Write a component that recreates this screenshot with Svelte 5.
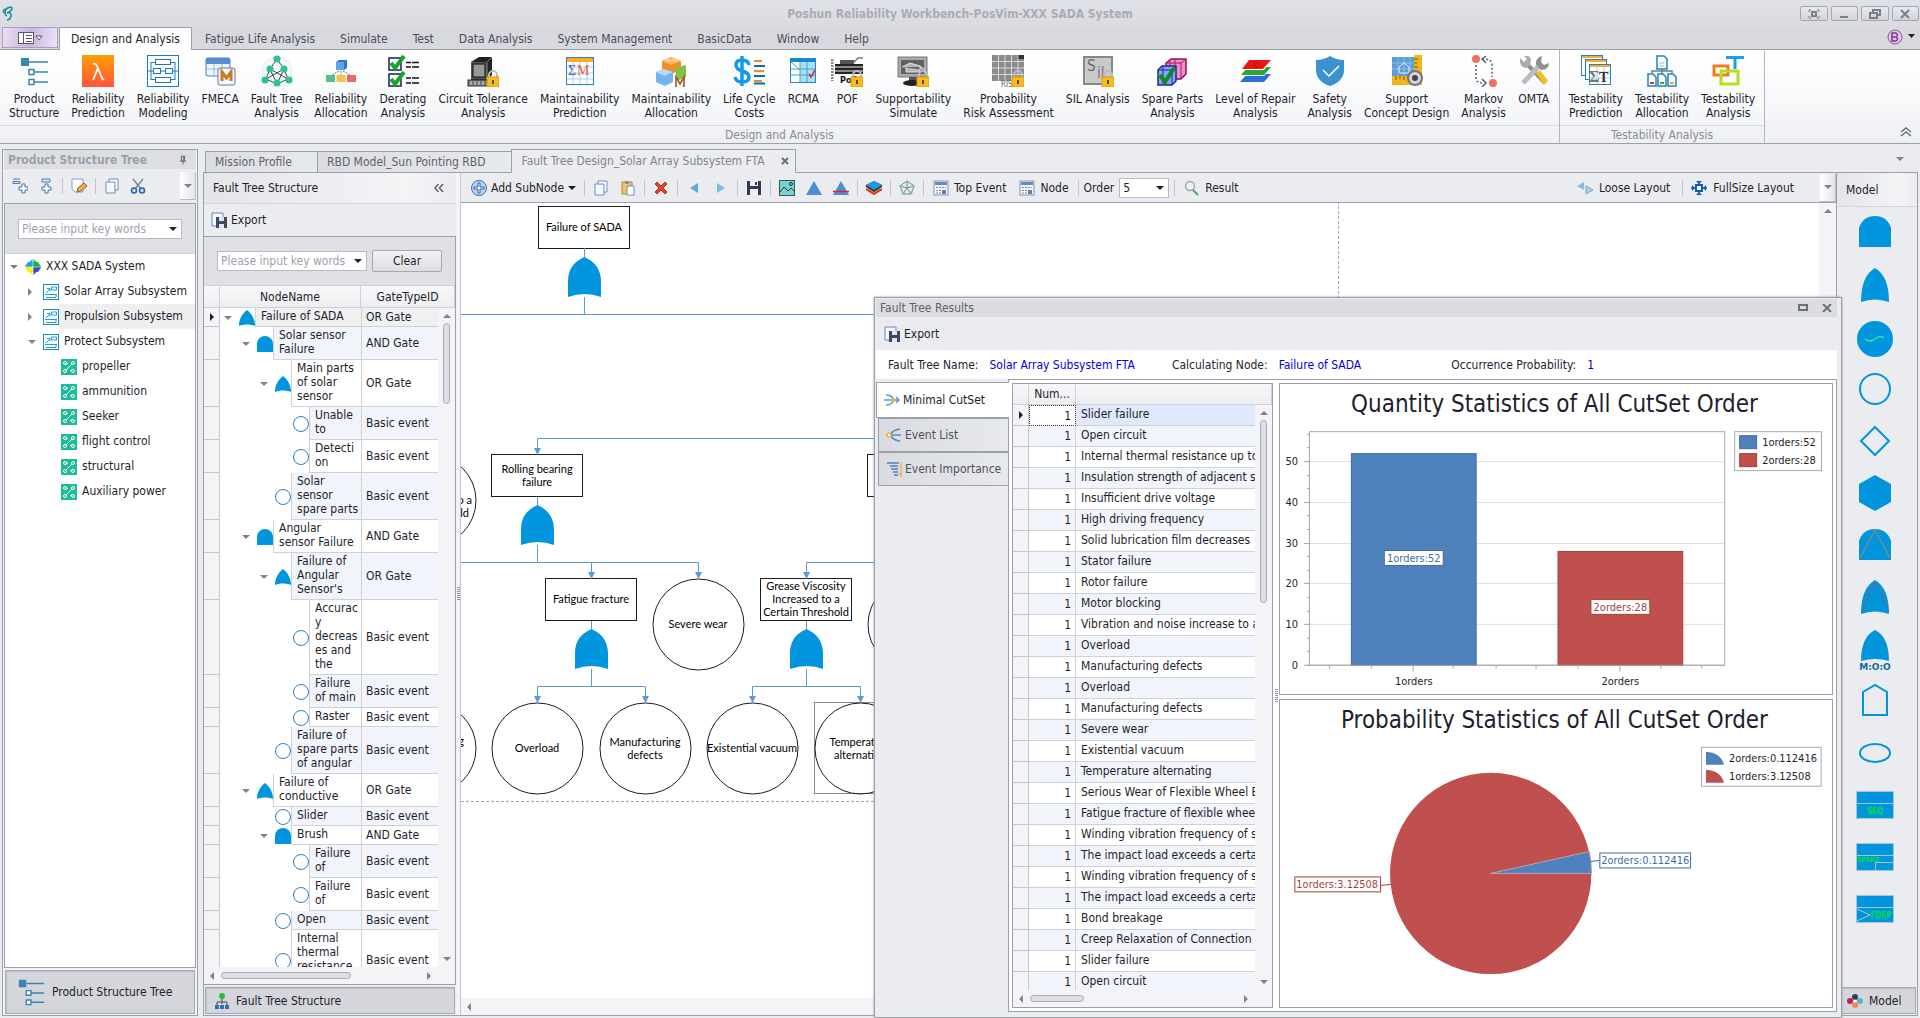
<script lang="ts">
	type FaultNode = { level: number; icon: string; name: string; gate: string; open?: boolean };
	type Shape = { kind: 'box' | 'circle'; x: number; y: number; lines: string[] };

	const lock =
		'<path d="M22 23v-3a4 4 0 0 1 8 0v3" fill="none" stroke="#b9bcc4" stroke-width="2"/><rect x="20" y="22" width="12" height="10" fill="#f8bd1c" stroke="#d79a10"/><rect x="25" y="25" width="2" height="4" fill="#5d4a14"/>';
	const orGate = '<path fill="#0095dc" d="M8 0c5 4 8 9 8 16c-5-2-11-2-16 0c0-7 3-12 8-16z"/>';
	const andGate = '<path fill="#0095dc" d="M0 16V8a8 8 0 0 1 16 0v8z"/>';
	const calendar =
		'<rect x="1" y="1" width="14" height="14" fill="#f3f4f7" stroke="#8b93a8"/><rect x="2" y="2" width="12" height="3" fill="#5c8fca"/><path d="M3 7.5h10M3 10.5h10M3 13h10" stroke="#7f87a0" stroke-dasharray="2 1"/><path d="M9 10h4v4h-4z" fill="#4b86c8"/>';

	const icons: Record<string, string> = {
		structure:
			'<path fill="#3a87ad" d="M3 3h8v8H3z"/><path d="M11 7h19M16 17h14M16 27h14" stroke="#3a87ad" stroke-width="1.5"/><path d="M11 14.5h5v5h-5zM11 24.5h5v5h-5z" fill="#fff" stroke="#3a87ad" stroke-width="1.5"/>',
		lambda:
			'<defs><linearGradient id="lam" x2="0" y2="1"><stop stop-color="#ff9d00"/><stop offset="1" stop-color="#ff5540"/></linearGradient></defs><rect width="32" height="32" fill="url(#lam)"/><path d="M11 9q3-1 4 2l5 12q1 2 2 1M15.500 14L11 25" fill="none" stroke="#fff" stroke-width="1.8"/>',
		blocks:
			'<g fill="#fff" stroke="#1b79c9"><rect x=".5" y=".5" width="31" height="31"/><path d="M4 7v18M28 7v18M0 16h32M4 7.5h24M4 24.5h24" fill="none"/><rect x="8.5" y="4.5" width="15" height="5"/><rect x="6.5" y="13.5" width="7" height="5"/><rect x="18.5" y="13.5" width="7" height="5"/><rect x="8.5" y="22.5" width="15" height="5"/></g>',
		fmeca:
			'<rect x="2" y="3" width="24" height="18" rx="2" fill="#eef4fc" stroke="#4d7cc0"/><path d="M2 3h24v6H2z" fill="#5a8cd0"/><path d="M2 14h24M10 9v12M18 9v12" stroke="#9db7de"/><rect x="14" y="13" width="17" height="17" rx="2" fill="#f4f7fc" stroke="#5a78b0"/><path d="M18 26v-9l4.5 6l4.5-6v9" fill="none" stroke="#d2781c" stroke-width="3"/>',
		fta:
			'<circle cx="16" cy="17" r="15" fill="#f6f8f8" stroke="#e6eaea"/><path d="M16 4L9 14L5 24L16 29L27 24L23 14zM9 14L16 29L23 14M9 14L27 24M23 14L5 24" fill="none" stroke="#3b4a50"/><g fill="#2bc095"><circle cx="16" cy="4" r="3.500"/><circle cx="9" cy="14" r="3.500"/><circle cx="23" cy="14" r="3.500"/><circle cx="4" cy="25" r="3.500"/><circle cx="16" cy="28" r="3.500"/><circle cx="28" cy="25" r="3.500"/></g>',
		alloc:
			'<path d="M11 7l3-2h8v8l-3 2h-8z" fill="#2f77c8"/><path d="M11 7h8v8h-8z" fill="#5ca5e8"/><path d="M14 16l-7 4M16 16v4M18 16l7 4" stroke="#5a7fa8" stroke-dasharray="2 1"/><rect x="1" y="20" width="9" height="7" fill="#5ac08a"/><rect x="11.500" y="20" width="9" height="7" fill="#f7c046"/><rect x="22" y="20" width="9" height="7" fill="#ee6a68"/>',
		derating:
			'<g fill="#fff" stroke="#12204e" stroke-width="1.500"><rect x="2" y="3" width="12" height="12"/><rect x="2" y="19" width="12" height="12"/></g><path d="M4 8l4 5L17 1M4 24l4 5l9-12" fill="none" stroke="#18a32c" stroke-width="4"/><path d="M19 7.500h5m1 0h7M19 12h5m1 0h7M19 23h5m1 0h7M19 28h5m1 0h7" stroke="#111" stroke-width="1.500"/>',
		circuit:
			'<path d="M4 7l8-5h13v18l-5 5H4z" fill="#222"/><path d="M4 7h16v17H4z" fill="#555"/><rect x="6" y="9" width="12" height="13" fill="#999" stroke="#111"/><path d="M20 7l5-5M20 8v16" stroke="#888"/><rect x="1" y="25" width="22" height="6" fill="#777" stroke="#333"/><path d="M4 26v4M8 26v4M12 26v4M16 26v4" stroke="#ddd"/>' + lock,
		maintPred:
			'<rect x="2.500" y="2.500" width="27" height="27" fill="#fff" stroke="#2c80b4"/><path d="M3 3h26v4H3z" fill="#f9ac2e"/><path d="M3 12h26M3 18h26M3 24h26M9 7v22M16 7v22M23 7v22" stroke="#a9cfe8"/><text x="4" y="20" font-size="14" font-family="Liberation Serif" fill="#4b5ec8">Σ</text><text x="13" y="20" font-size="14" font-family="Liberation Serif" fill="#e0653a">M</text>',
		maintAlloc:
			'<path d="M7 6l9-4l10 4v9l-10 4l-9-4z" fill="#f28e28"/><path d="M7 6l9-4l10 4l-10 4z" fill="#fbb867"/><path d="M20 13l11-3v12l-9 4z" fill="#84c045"/><path d="M1 17l8-3l9 3v10l-8 4l-9-4z" fill="#74b4ec"/><path d="M1 17l8-3l9 3l-9 4z" fill="#b6daf8"/><g fill="#ffd08f"><ellipse cx="13" cy="5" rx="3" ry="1.500"/><ellipse cx="20" cy="5" rx="3" ry="1.500"/></g><path d="M21 32V22l4 7l4-7v10" fill="none" stroke="#a4532c" stroke-width="1.600"/>',
		cost:
			'<path d="M16 10q-1-5-7-5q-6 0-6 5q0 4 6 6q7 2 7 6q0 5-7 5q-6 0-7-5M9 1v30" fill="none" stroke="#0f9bea" stroke-width="3.500"/><path d="M21 6h8M21 16h10M21 26h8" stroke="#f08a1d" stroke-width="2"/><path d="M21 11h11M21 21h11M21 28.500h11" stroke="#0f6aa8" stroke-width="2"/>',
		rcma:
			'<rect x="3.500" y="3.500" width="25" height="24" fill="#fff" stroke="#2788c8"/><path d="M4 4h24v3H4z" fill="#1487d2"/><path d="M13 7h15v20H13z" fill="#a5e0f4"/><path d="M4 14h24M4 20h24M13 7v20M20 7v20M4 7l9 8" stroke="#4a9bcf"/><path d="M22 19l2 3l4-7" fill="none" stroke="#e62222" stroke-width="1.500"/>',
		pof:
			'<path d="M1 4v22" stroke="#8a8a8a" stroke-width="3" stroke-dasharray="2 1"/><path d="M4 9h28v10H4z" fill="#222"/><path d="M4 12h28M4 16h28" stroke="#8b8b8b" stroke-width="2"/><path d="M9 5h14v4H9z" fill="#555"/><path d="M22 8l5-5h5" fill="none" stroke="#777" stroke-width="1.500"/><text x="9" y="28" font-size="9" font-weight="bold" font-family="DejaVu Sans Condensed" fill="#111">PoF</text>' + lock,
		support:
			'<rect x="1" y="2" width="29" height="20" fill="#aaa" stroke="#777"/><rect x="4" y="5" width="23" height="14" fill="#5f6163"/><path d="M5 12l8-4l10 3l5 4M9 12v5h14v-5" fill="#b5b8bb" stroke="#dfe0e2"/><path d="M12 22h8v4h-8z" fill="#555"/><ellipse cx="15" cy="28" rx="9" ry="3" fill="#222"/>' + lock,
		risk:
			'<path d="M0 0h32v26H0z" fill="#8a8a8a"/><path d="M0 6.500h32M0 13h32M0 19.500h32M6.500 0v26M13 0v26M19.500 0v26M26 0v26" stroke="#d9d9d9"/><path d="M26.500 0H32v4h-5.500z" fill="#333"/><text x="9" y="32" font-size="8" font-family="DejaVu Sans Condensed" fill="#666">RIS</text>' + lock,
		sil:
			'<rect x="2" y="2" width="28" height="27" fill="#c9c9c9" stroke="#888" stroke-width="2"/><text x="5" y="16" font-size="15" font-family="DejaVu Sans Condensed" fill="#666">S</text><text x="15" y="23" font-size="15" font-family="DejaVu Sans Condensed" fill="#777">il</text>' + lock,
		spare:
			'<path d="M10 8l5-4h15v15l-5 5H10z" fill="#f48cc0" stroke="#8c1560" stroke-width="1.500"/><path d="M10 8h15v16M25 8l5-4M14 4v16M19 4v18" fill="none" stroke="#a01c70"/><path d="M2 15l4-4h14v15l-4 4H2z" fill="#86a4f2" stroke="#1a2a9a" stroke-width="1.500"/><path d="M2 15h14v15M16 15l4-4M7 11v18" fill="none" stroke="#1a2a9a"/><path d="M4 20l5 7l9-14" fill="none" stroke="#0e8a1e" stroke-width="4"/>',
		level:
			'<path d="M8 19h24l-7 8H1z" fill="#2c6fd6"/><path d="M9 12h24l-8 9H2z" fill="#fff"/><path d="M9 12h23l-7 8H2z" fill="#27a836"/><path d="M10 4h23l-8 11H3z" fill="#fff"/><path d="M10 5h22l-8 9H3z" fill="#f01414"/><path d="M16 7h3q3 2 0 5h-4z" fill="none" stroke="#9a2020"/>',
		safety:
			'<path d="M16 1q6 4 14 4v10q0 11-14 16Q2 26 2 15V5q8 0 14-4z" fill="#3a92cf"/><path d="M9 15l6 6l10-10" fill="none" stroke="#fff" stroke-width="1.500"/>',
		concept:
			'<rect x="1" y="2" width="23" height="19" fill="#5a9cd8"/><path d="M1 8h23M1 14h23M7 2v19M13 2v19M19 2v19" stroke="#8dbde6"/><path d="M8 16v-4l5-4l5 4v6H9z" fill="none" stroke="#e4f0fa"/><path d="M23 0h8v30H1v-9h22z" fill="#f3b51e"/><path d="M23 4h4M23 8h3M23 12h4M5 21v4M9 21v3M13 21v4M17 21v3" stroke="#7b5b10"/><circle cx="24" cy="23" r="8" fill="#757575"/><circle cx="24" cy="23" r="6" fill="#d5d5d5"/><circle cx="24" cy="23" r="3" fill="#444"/>',
		markov:
			'<circle cx="8" cy="4" r="4" fill="#f0705f"/><circle cx="25" cy="28" r="4" fill="#f0705f"/><path d="M8 10v14q0 4 8 4M14 4q10 0 10 5v13" fill="none" stroke="#4d6272" stroke-width="1.500" stroke-dasharray="2 2"/><path d="M18 1l-4 3l4 4M14 24l4 4l-4 4" fill="none" stroke="#4d6272" stroke-width="1.500"/>',
		omta:
			'<path d="M27 28L9 9" stroke="#8d8f92" stroke-width="4"/><path d="M2 3l4 4l3-3l-3-3q6-1 7 4l-1 5l-4 3Q1 12 2 3z" fill="#a9abae"/><path d="M5 28L20 12" stroke="#b9bbbe" stroke-width="5"/><path d="M18 10q-1-7 6-9l-1 6l3 3l5-2q0 7-8 7z" fill="#8f9295"/><path d="M18 18l4-3l8 11l-4 4z" fill="#f6bd20"/>',
		testPred:
			'<g fill="#fff" stroke="#2c80b4"><rect x="1.500" y=".5" width="21" height="20"/><rect x="5.500" y="4.500" width="21" height="20"/><rect x="9.500" y="9.500" width="21" height="20"/></g><path d="M2 2h20M6 6h20M10 11h20" stroke="#f9ac2e" stroke-width="2"/><path d="M10 17h20M10 23h20M17 12v17M24 12v17" stroke="#a9cfe8"/><text x="9" y="27" font-size="16" font-weight="bold" font-family="Liberation Serif" fill="#777">Σ</text><text x="19" y="27" font-size="14" font-weight="bold" font-family="Liberation Serif" fill="#333">T</text>',
		testAlloc:
			'<g fill="#fff" stroke="#1d84c0" stroke-width="1.500"><path d="M11 1h7l3 3v10H11zM2 19h5l3 3v9H2zM12 19h5l3 3v9h-8zM22 19h5l3 3v9h-8z"/></g><path d="M16 14v5M6 18v-2h20v2" fill="none" stroke="#777" stroke-width="1.500"/><path d="M13 8h5M13 11h5" stroke="#8dbde6"/><path d="M4 27h4v2H4z" fill="#e03030"/><path d="M14 27h4v2h-4z" fill="#4aa81c"/><path d="M24 27h4v2h-4z" fill="#f3a01e"/>',
		testAnalysis:
			'<path d="M14 2.500h18M23 2v12" stroke="#15a0e8" stroke-width="3" fill="none"/><rect x="2" y="11" width="14" height="9" fill="none" stroke="#f47c20" stroke-width="3"/><rect x="9" y="16" width="17" height="13" fill="none" stroke="#b4e01c" stroke-width="3"/>',
		lower: '<path d="M1 1h7M1 3.500h7v2H1z" fill="#dfe9f6" stroke="#4a7bb8"/><path d="M10 6h3v3h3v3h-3v3h-3v-3H7V9h3z" fill="#fff" stroke="#3d72b4"/>',
		insert: '<path d="M4 1h8v3H4z" fill="#dfe9f6" stroke="#4a7bb8"/><path d="M7 6h3v3h3v3h-3v3H7v-3H4V9h3z" fill="#fff" stroke="#3d72b4"/>',
		edit: '<path d="M1 1h11v13H4l-3-3z" fill="#fff" stroke="#8c9cc4"/><path d="M6 14l1-4l6-5l3 3l-6 5z" fill="#f0b04a" stroke="#8a5f20"/>',
		copy: '<path d="M5 1h9v11H5z" fill="#fff" stroke="#6f8cc4"/><path d="M2 4h9v11H2z" fill="#f4f8ff" stroke="#6f8cc4"/>',
		cut: '<path d="M3 1l8 10M13 1L5 11" stroke="#7b8699" stroke-width="1.5"/><circle cx="4" cy="12.500" r="2.500" fill="#cfe0f8" stroke="#2d62b0" stroke-width="1.500"/><circle cx="12" cy="12.500" r="2.500" fill="#cfe0f8" stroke="#2d62b0" stroke-width="1.500"/>',
		system: '<path d="M7.500 0v7.500H0z" fill="#1aa3e8"/><path d="M8.500 0v7.500H16z" fill="#1eb04c"/><path d="M7.500 16V8.500H0z" fill="#fdf000"/><path d="M8.500 16V8.500H16z" fill="#3b4cc8"/><path d="M3 3h4.500v4.500H0z" fill="#1aa3e8"/><path d="M13 3H8.500v4.500H16z" fill="#1eb04c"/><path d="M3 13h4.500V8.500H0z" fill="#fdf000"/><path d="M13 13H8.500V8.500H16z" fill="#3b4cc8"/>',
		subsystem: '<rect x=".5" y=".5" width="15" height="15" fill="#fff" stroke="#1b8fa6"/><path d="M8.500 3h5v3h-5zM3 9l4-4M4 4.500h3v3M2 10.500h12M3 13.500h10v-3" fill="none" stroke="#1aa0d8"/>',
		part: '<rect width="16" height="16" fill="#1cbd9b"/><path d="M5 11l6-6M4 6l3-2M9 12l3-2" stroke="#fff"/><g fill="none" stroke="#fff"><circle cx="4" cy="4" r="1.500"/><circle cx="4" cy="12" r="1.500"/><circle cx="12" cy="4" r="1.500"/><circle cx="12" cy="12" r="1.500"/></g>',
		or: orGate,
		and: andGate,
		basic: '<circle cx="8" cy="8" r="7.500" fill="#fff" stroke="#2f7ec8"/>',
		export: '<path d="M1 1h11v13H1z" fill="#f4f8ff" stroke="#6f83b8"/><path d="M5 5h11v11H5z" fill="#3c4a63"/><path d="M8 5h5v4H8zM8 12h5v4H8z" fill="#dfe6f0"/>',
		addNode: '<circle cx="8" cy="8" r="7.500" fill="#b8d4ef" stroke="#3d72b4"/><path d="M7 3h2v4h4v2H9v4H7V9H3V7h4z" fill="#fff" stroke="#2d62a8"/>',
		paste: '<path d="M2 2h10v12H2z" fill="#f2c468" stroke="#b5842c"/><path d="M5 1h4v3H5z" fill="#8590a6"/><path d="M7 6h7v9H7z" fill="#fff" stroke="#6f8cc4"/>',
		remove: '<path d="M2 4l2-2l4 4l4-4l2 2l-4 4l4 4l-2 2l-4-4l-4 4l-2-2l4-4z" fill="#e0452e" stroke="#b5301f"/>',
		back: '<path d="M12 3v10L4 8z" fill="#5aa6e0"/>',
		forward: '<path d="M4 3v10l8-5z" fill="#7fbbe8"/>',
		save: '<path d="M1 1h14v14H1z" fill="#2f3b50"/><path d="M4 1h8v5H4zM4 9h8v6H4z" fill="#eef1f6"/><path d="M9 2h2v3H9z" fill="#2f3b50"/>',
		image: '<rect x=".5" y=".5" width="15" height="15" fill="#7fd0d4" stroke="#33575a"/><path d="M1 12l4-5l4 4l3-3l3 3" fill="none" stroke="#1c3a3c"/><circle cx="12" cy="4" r="1.500" fill="none" stroke="#1c3a3c"/>',
		tri: '<path d="M8 1l8 14H0z" fill="#4a8fd6"/>',
		triRed: '<path d="M8 1l8 14H0z" fill="#4a8fd6"/><path d="M0 11.500h16" stroke="#e62222" stroke-width="1.500"/>',
		layers: '<path d="M0 10l8 5l8-5l-8-4z" fill="#f5a21c"/><path d="M0 8l8 5l8-5v2l-8 5l-8-5z" fill="#d3311f"/><path d="M0 5l8-4l8 4v2l-8 5l-8-5z" fill="#333"/><path d="M0 5l8-4l8 4l-8 5z" fill="#1a9be4"/>',
		net: '<path d="M8 1l7 5l-3 8H4L1 6zM8 1v7M15 6L8 8L1 6M12 14L8 8l-4 6" fill="none" stroke="#6b8792"/><g fill="#7fc2a8"><circle cx="8" cy="2" r="1.500"/><circle cx="14" cy="6" r="1.500"/><circle cx="2" cy="6" r="1.500"/><circle cx="12" cy="13" r="1.500"/><circle cx="4" cy="13" r="1.500"/></g>',
		calendar,
		search: '<circle cx="6" cy="6" r="4.500" fill="#eaf4f4" stroke="#9aa6b0" stroke-width="1.500"/><path d="M9 10l5 5" stroke="#4fa86a" stroke-width="2"/>',
		loose: '<path d="M7 2v8L0 6z" fill="#8ab8e0"/><path d="M9 6v8l7-4z" fill="#a7d2ee" stroke="#6fa8d4"/>',
		full: '<path d="M5 5h6v6H5z" fill="#fff" stroke="#1458b8" stroke-width="2"/><path d="M8 1v3M8 12v3M0 8h4M12 8h4" stroke="#1458b8" stroke-width="1.500"/><path d="M5 1h6l-3 3zM5 15h6l-3-3zM1 5v6l3-3zM15 5v6l-3-3z" fill="#1458b8"/>',
		cutset: '<path d="M2 3q6 0 8 5q-2 5-8 5M0 8h15M12 5l3 3l-3 3" fill="none" stroke="#5c9bd6" stroke-width="1.500"/><circle cx="9" cy="8" r="2" fill="#f0b030"/>',
		eventList: '<path d="M14 2Q6 3 5 8q1 5 9 6M5 8h10" fill="none" stroke="#4a90d0" stroke-width="1.500"/><circle cx="3" cy="8" r="2" fill="#fff" stroke="#f0b030" stroke-width="1.500"/>',
		importance: '<path d="M1 2h12M4 5h8M5 8h7M7 11h5M8 14h4" stroke="#4a80c8" stroke-width="1.500"/><path d="M15 1v12M13 12l2 3l1-3" stroke="#f0b848" stroke-width="1.500" fill="none"/>',
		faultTree: '<circle cx="8" cy="3" r="3" fill="#20c030"/><path d="M8 6v5M3 12V9h10v3" fill="none" stroke="#444"/><path d="M1 12h4v4H1zM6 12h4v4H6zM11 12h4v4h-4z" fill="#2b6fc0"/>',
		model: '<circle cx="8" cy="4" r="3" fill="#333f55"/><circle cx="3" cy="8" r="3" fill="#c81c50"/><circle cx="13" cy="8" r="3" fill="#5fb4cc"/><circle cx="8" cy="12" r="3" fill="#f08850"/><circle cx="8" cy="8" r="1.500" fill="#fff"/>',
		pin: '<path d="M5 3h6M6 3v6h3V3M10 3v6M4 9.500h8M8 10v4" fill="none" stroke="#6b6e7c" stroke-width="1.500"/>'
	};

	const menu = ['Design and Analysis', 'Fatigue Life Analysis', 'Simulate', 'Test', 'Data Analysis', 'System Management', 'BasicData', 'Window', 'Help'];

	const ribbon = [
		{
			label: 'Design and Analysis',
			items: [
				['structure', 'Product\nStructure'],
				['lambda', 'Reliability\nPrediction'],
				['blocks', 'Reliability\nModeling'],
				['fmeca', 'FMECA'],
				['fta', 'Fault Tree\nAnalysis'],
				['alloc', 'Reliability\nAllocation'],
				['derating', 'Derating\nAnalysis'],
				['circuit', 'Circuit Tolerance\nAnalysis'],
				['maintPred', 'Maintainability\nPrediction'],
				['maintAlloc', 'Maintainability\nAllocation'],
				['cost', 'Life Cycle\nCosts'],
				['rcma', 'RCMA'],
				['pof', 'POF'],
				['support', 'Supportability\nSimulate'],
				['risk', 'Probability\nRisk Assessment'],
				['sil', 'SIL Analysis'],
				['spare', 'Spare Parts\nAnalysis'],
				['level', 'Level of Repair\nAnalysis'],
				['safety', 'Safety\nAnalysis'],
				['concept', 'Support\nConcept Design'],
				['markov', 'Markov\nAnalysis'],
				['omta', 'OMTA']
			]
		},
		{
			label: 'Testability Analysis',
			items: [
				['testPred', 'Testability\nPrediction'],
				['testAlloc', 'Testability\nAllocation'],
				['testAnalysis', 'Testability\nAnalysis']
			]
		}
	];

	const product = [
		{ level: 0, icon: 'system', name: 'XXX SADA System', arrow: 'down' },
		{ level: 1, icon: 'subsystem', name: 'Solar Array Subsystem', arrow: 'right' },
		{ level: 1, icon: 'subsystem', name: 'Propulsion Subsystem', arrow: 'right', selected: true },
		{ level: 1, icon: 'subsystem', name: 'Protect Subsystem', arrow: 'down' },
		{ level: 2, icon: 'part', name: 'propeller' },
		{ level: 2, icon: 'part', name: 'ammunition' },
		{ level: 2, icon: 'part', name: 'Seeker' },
		{ level: 2, icon: 'part', name: 'flight control' },
		{ level: 2, icon: 'part', name: 'structural' },
		{ level: 2, icon: 'part', name: 'Auxiliary power' }
	];

	const faultNodes: FaultNode[] = [
		{ level: 0, icon: 'or', name: 'Failure of SADA', gate: 'OR Gate', open: true },
		{ level: 1, icon: 'and', name: 'Solar sensor\nFailure', gate: 'AND Gate', open: true },
		{ level: 2, icon: 'or', name: 'Main parts\nof solar\nsensor', gate: 'OR Gate', open: true },
		{ level: 3, icon: 'basic', name: 'Unable\nto', gate: 'Basic event' },
		{ level: 3, icon: 'basic', name: 'Detecti\non', gate: 'Basic event' },
		{ level: 2, icon: 'basic', name: 'Solar\nsensor\nspare parts', gate: 'Basic event' },
		{ level: 1, icon: 'and', name: 'Angular\nsensor Failure', gate: 'AND Gate', open: true },
		{ level: 2, icon: 'or', name: "Failure of\nAngular\nSensor's", gate: 'OR Gate', open: true },
		{ level: 3, icon: 'basic', name: 'Accurac\ny\ndecreas\nes and\nthe', gate: 'Basic event' },
		{ level: 3, icon: 'basic', name: 'Failure\nof main', gate: 'Basic event' },
		{ level: 3, icon: 'basic', name: 'Raster', gate: 'Basic event' },
		{ level: 2, icon: 'basic', name: 'Failure of\nspare parts\nof angular', gate: 'Basic event' },
		{ level: 1, icon: 'or', name: 'Failure of\nconductive', gate: 'OR Gate', open: true },
		{ level: 2, icon: 'basic', name: 'Slider', gate: 'Basic event' },
		{ level: 2, icon: 'and', name: 'Brush', gate: 'AND Gate', open: true },
		{ level: 3, icon: 'basic', name: 'Failure\nof', gate: 'Basic event' },
		{ level: 3, icon: 'basic', name: 'Failure\nof', gate: 'Basic event' },
		{ level: 2, icon: 'basic', name: 'Open', gate: 'Basic event' },
		{ level: 2, icon: 'basic', name: 'Internal\nthermal\nresistance\n ', gate: 'Basic event' }
	];

	const cutSets = [
		'Slider failure',
		'Open circuit',
		'Internal thermal resistance up to',
		'Insulation strength of adjacent s',
		'Insufficient drive voltage',
		'High driving frequency',
		'Solid lubrication film decreases',
		'Stator failure',
		'Rotor failure',
		'Motor blocking',
		'Vibration and noise increase to a',
		'Overload',
		'Manufacturing defects',
		'Overload',
		'Manufacturing defects',
		'Severe wear',
		'Existential vacuum',
		'Temperature alternating',
		'Serious Wear of Flexible Wheel B',
		'Fatigue fracture of flexible wheel',
		'Winding vibration frequency of s',
		'The impact load exceeds a certain',
		'Winding vibration frequency of s',
		'The impact load exceeds a certain',
		'Bond breakage',
		'Creep Relaxation of Connection',
		'Slider failure',
		'Open circuit'
	];

	const shapes: Shape[] = [
		{ kind: 'box', x: 123, y: 24, lines: ['Failure of SADA'] },
		{ kind: 'box', x: 76, y: 272, lines: ['Rolling bearing', 'failure'] },
		{ kind: 'box', x: 452, y: 272, lines: [] },
		{ kind: 'box', x: 130, y: 396, lines: ['Fatigue fracture'] },
		{ kind: 'box', x: 345, y: 396, lines: ['Grease Viscosity', 'Increased to a', 'Certain Threshold'] },
		{ kind: 'circle', x: -31, y: 297, lines: [] },
		{ kind: 'circle', x: 237, y: 421, lines: ['Severe wear'] },
		{ kind: 'circle', x: 452, y: 421, lines: [] },
		{ kind: 'circle', x: -31, y: 545, lines: [] },
		{ kind: 'circle', x: 76, y: 545, lines: ['Overload'] },
		{ kind: 'circle', x: 184, y: 545, lines: ['Manufacturing', 'defects'] },
		{ kind: 'circle', x: 291, y: 545, lines: ['Existential vacuum'] },
		{ kind: 'circle', x: 399, y: 545, lines: ['Temperature', 'alternating'] }
	];
	const gates = [
		[123, 54],
		[76, 302],
		[130, 426],
		[345, 426]
	];
	const links = [
		'M123.5 45v9M123.5 94v17.5M0 111.5h1358',
		'M76.5 252V235.5H460M76.5 294v8M76.5 342v17.5M0 359.5h237.5V376M130.5 359.5V376',
		'M130.5 418v8M130.5 466v17.5M76.5 500v-16.5h108V500',
		'M345.5 376v-16.5H460M345.5 418v8M345.5 466v17.5M291.5 500v-16.5h108V500'
	];
	const arrows = [
		[76, 251],
		[130, 375],
		[237, 375],
		[345, 375],
		[76, 499],
		[184, 499],
		[291, 499],
		[399, 499]
	];

	const palette = [
		{ name: 'AND gate', svg: '<path fill="#0095dc" d="M8 38V19q4-12 16-12t16 12v19z"/>' },
		{ name: 'OR gate', svg: '<path fill="#0095dc" d="M24 7q14 8 14 34q-14-5-28 0Q10 15 24 7z"/>' },
		{ name: 'Transfer', svg: '<circle cx="24" cy="26" r="18" fill="#0095dc"/><path d="M14 26q5 4 10 0t9-1" fill="none" stroke="#30e8a0" stroke-width="1.500"/>' },
		{ name: 'Basic event', svg: '<circle cx="24" cy="24" r="15" fill="none" stroke="#0095dc" stroke-width="2"/>' },
		{ name: 'Undeveloped event', svg: '<path d="M24 10l14 14l-14 14l-14-14z" fill="none" stroke="#0095dc" stroke-width="2"/>' },
		{ name: 'Inhibit gate', svg: '<path fill="#0095dc" d="M24 6l16 9v18l-16 9l-16-9V15z"/>' },
		{ name: 'Priority AND gate', svg: '<path fill="#0095dc" d="M8 39V20q4-12 16-12t16 12v19z"/><path d="M9 37L24 9l15 28" fill="none" stroke="#c08050"/>' },
		{ name: 'Exclusive OR gate', svg: '<path fill="#0095dc" d="M24 7q14 8 14 34q-14-5-28 0Q10 15 24 7z"/><path d="M11 38L24 9l14 29" fill="none" stroke="#c04060" stroke-dasharray="2 1"/>' },
		{ name: 'Voting gate', svg: '<path fill="#0095dc" d="M24 5q14 7 14 31q-14-4-28 0Q10 12 24 5z"/><text x="24" y="45" text-anchor="middle" font-size="9" font-weight="bold" font-family="DejaVu Sans" fill="#0d6c9c">M:O:O</text>' },
		{ name: 'House event', svg: '<path d="M12 38V15l12-7l12 7v23z" fill="none" stroke="#0095dc" stroke-width="2"/>' },
		{ name: 'Conditioning event', svg: '<ellipse cx="24" cy="24" rx="15" ry="9" fill="none" stroke="#0095dc" stroke-width="2"/>' },
		{ name: 'SEQ gate', svg: '<path fill="#0095dc" stroke="#a8c4d4" d="M5.500 10.500h37v27h-37zM6 22.500h36"/><text x="24" y="33" text-anchor="middle" font-size="8" font-weight="bold" font-family="DejaVu Sans Condensed" fill="#00e040">SEQ</text>' },
		{ name: 'SPARE gate', svg: '<path fill="#0095dc" stroke="#a8c4d4" d="M5.500 10.500h37v27h-37zM6 22.500h36M24.500 37V29.500H42"/><text x="17" y="29" text-anchor="middle" font-size="7" font-weight="bold" font-family="DejaVu Sans Condensed" fill="#00e040">SPARE</text>' },
		{ name: 'FDEP gate', svg: '<path fill="#0095dc" stroke="#a8c4d4" d="M5.500 10.500h37v27h-37zM6 22.500h36M6 24l13 6l-13 6"/><text x="30" y="33" text-anchor="middle" font-size="8" font-weight="bold" font-family="DejaVu Sans Condensed" fill="#00e040">FDEP</text>' }
	];

	const axisY = 281;
	const bars = [
		{ name: '1orders', value: 52, x: 71, fill: '#4f81bd', edge: '#3f6ca3' },
		{ name: '2orders', value: 28, x: 278, fill: '#c0504d', edge: '#a33f3c' }
	];
	const barHeight = (v: number) => Math.round(v * 4.08);
	const majorTicks = [0, 10, 20, 30, 40, 50];
	const minorTicks = Array.from({ length: 18 }, (_, i) => Math.round((i * 40.8) / 3));
	const minorX = [50, 92, 174, 217, 257, 299, 382, 423];

	let keyword = $state('');
	let nodeKeyword = $state('');
	let order = $state('5');
</script>

{#snippet icon(name: string, size: number)}
	<svg class="icon" width={size} height={size} viewBox={size >= 30 ? '0 0 32 32' : '0 0 16 16'} aria-hidden="true">{@html icons[name]}</svg>
{/snippet}

{#snippet vscroll(kind: string)}
	<div class="vscroll">
		<i class="tri up"></i>
		<i class="thumb {kind}"></i>
		<i class="tri down"></i>
	</div>
{/snippet}

{#snippet hscroll(kind: string)}
	<div class="hscroll">
		<i class="tri left"></i>
		<i class="thumb {kind}"></i>
		<i class="tri right"></i>
	</div>
{/snippet}

<div class="app">
	<header class="titlebar">
		<svg class="logo" width="12" height="16" viewBox="0 0 12 16" aria-hidden="true">
			<path d="M2 7Q0 4 4 3q5-3 6-1q0 3-5 5q5-1 4 3t-4 4M4 3Q2 9 5 10" fill="none" stroke="#138a94" stroke-width="1.500" />
		</svg>
		<h1>Poshun Reliability Workbench-PosVim-XXX SADA System</h1>
		<div class="window-buttons">
			<button aria-label="Full screen"><svg width="12" height="10"><path d="M1 3V1h2M9 1h2v2M11 7v2H9M3 9H1V7" fill="none" stroke="#7b7e8b" /><rect x="4" y="3" width="4" height="4" fill="none" stroke="#7b7e8b" stroke-width="2" /></svg></button>
			<button aria-label="Minimize"><svg width="12" height="10"><path d="M2 8h8" stroke="#7b7e8b" stroke-width="2" /></svg></button>
			<button aria-label="Restore"><svg width="12" height="10"><path d="M4 3V1h7v5H9M1 4h7v5H1z" fill="none" stroke="#7b7e8b" stroke-width="2" /></svg></button>
			<button aria-label="Close"><svg width="12" height="10"><path d="M2 1l8 8M10 1l-8 8" stroke="#7b7e8b" stroke-width="2" /></svg></button>
		</div>
	</header>

	<nav class="menu">
		<button class="app-button" aria-label="Application menu">
			<svg width="26" height="14"><rect x="1.500" y="1.500" width="15" height="11" fill="#fff" stroke="#555866" /><path d="M6.500 1v12M9 4.500h6M9 7.500h6M9 10.500h6" stroke="#555866" /><path d="M19 5h6l-3 4z" fill="#fff" stroke="#555866" /></svg>
		</button>
		{#each menu as item, i}
			<button class="menu-tab" class:active={i === 0}>{item}</button>
		{/each}
		<button class="skin" aria-label="Skin">
			<svg width="28" height="16"><circle cx="8" cy="8" r="7" fill="#e3c3e6" stroke="#8a5a94" /><path d="M5 4h4q3 2 0 4q3 2 0 4H5zM6 8h4" fill="none" stroke="#7a3a86" stroke-width="1.500" /><path d="M21 5h7l-3.500 4z" fill="#1e1e2d" /></svg>
		</button>
	</nav>

	<div class="ribbon">
		{#each ribbon as group}
			<section class="group">
				<div class="group-items">
					{#each group.items as [name, label]}
						<button class="big">
							{@render icon(name, 32)}
							<span>{label}</span>
						</button>
					{/each}
				</div>
				<div class="group-label">{group.label}</div>
			</section>
		{/each}
		<button class="collapse" aria-label="Collapse ribbon">
			<svg width="12" height="10"><path d="M1 5l5-4l5 4M1 9l5-4l5 4" fill="none" stroke="#6b6e7c" stroke-width="1.500" /></svg>
		</button>
	</div>

	<main class="workspace">
		<aside class="product">
			<div class="panel-title"><b>Product Structure Tree</b>{@render icon('pin', 12)}</div>
			<div class="bar">
				<button aria-label="Add sibling">{@render icon('lower', 16)}</button>
				<button aria-label="Add child">{@render icon('insert', 16)}</button>
				<i class="sep"></i>
				<button aria-label="Edit">{@render icon('edit', 16)}</button>
				<i class="sep"></i>
				<button aria-label="Copy">{@render icon('copy', 16)}</button>
				<button aria-label="Cut">{@render icon('cut', 16)}</button>
				<button class="overflow" aria-label="More"><i class="tri down"></i></button>
			</div>
			<div class="product-body">
				<div class="search">
					<div class="combo">
						<input aria-label="Search product tree" placeholder="Please input key words" bind:value={keyword} />
						<button aria-label="Open list"><i class="tri down dark"></i></button>
					</div>
				</div>
				<ul class="tree">
					{#each product as node}
						<li style="padding-left: {node.level * 18 + 4}px">
							<span class="twist">{#if node.arrow}<i class="tri {node.arrow}"></i>{/if}</span>
							{@render icon(node.icon, 16)}
							<span class="name" class:selected={node.selected}>{node.name}</span>
						</li>
					{/each}
				</ul>
			</div>
			<button class="dock-button tall">{@render icon('structure', 30)}Product Structure Tree</button>
		</aside>

		<div class="documents">
			<div class="doc-tabs">
				<button class="doc-tab">Mission Profile</button>
				<button class="doc-tab">RBD Model_Sun Pointing RBD</button>
				<button class="doc-tab active">
					Fault Tree Design_Solar Array Subsystem FTA
					<svg width="8" height="8"><path d="M1 1l6 6M7 1L1 7" stroke="#6b6e7c" stroke-width="2" /></svg>
				</button>
				<i class="tri down end"></i>
			</div>

			<div class="doc">
				<aside class="fault">
					<div class="caption">
						Fault Tree Structure
						<svg width="10" height="8"><path d="M4.500 0L1 4l3.500 4M9 0L5.500 4L9 8" fill="none" stroke="#5d606c" stroke-width="1.500" /></svg>
					</div>
					<div class="export-row"><button class="tool">{@render icon('export', 16)}Export</button></div>
					<div class="fault-body">
						<div class="search wide">
							<div class="combo">
								<input aria-label="Search fault tree" placeholder="Please input key words" bind:value={nodeKeyword} />
								<button aria-label="Open list"><i class="tri down dark"></i></button>
							</div>
							<button class="clear">Clear</button>
						</div>
						<div class="fault-grid">
							<table>
								<thead>
									<tr><th></th><th>NodeName</th><th>GateTypeID</th></tr>
								</thead>
								<tbody>
									{#each faultNodes as node, i}
										<tr class:alt={i % 2 === 1} class:current={i === 0}>
											<td class="gutter">{#if i === 0}<i class="tri right dark"></i>{/if}</td>
											<td class="node" style="padding-left: {node.level * 18 + 3}px">
												<span class="twist">{#if node.open}<i class="tri down"></i>{/if}</span>
												{@render icon(node.icon, 16)}
												<span class="cell">{node.name}</span>
											</td>
											<td class="gate">{node.gate}</td>
										</tr>
									{/each}
								</tbody>
							</table>
							{@render vscroll('short')}
						</div>
						{@render hscroll('long')}
					</div>
					<button class="dock-button">{@render icon('faultTree', 16)}Fault Tree Structure</button>
				</aside>

				<div class="splitter"></div>

				<section class="design">
					<div class="toolbar">
						<button class="tool">{@render icon('addNode', 16)}Add SubNode<i class="tri down dark"></i></button>
						<i class="sep"></i>
						<button class="tool" aria-label="Copy">{@render icon('copy', 16)}</button>
						<button class="tool" aria-label="Paste">{@render icon('paste', 16)}</button>
						<i class="sep"></i>
						<button class="tool" aria-label="Delete">{@render icon('remove', 16)}</button>
						<i class="sep"></i>
						<button class="tool" aria-label="Back">{@render icon('back', 16)}</button>
						<button class="tool" aria-label="Forward">{@render icon('forward', 16)}</button>
						<i class="sep"></i>
						<button class="tool" aria-label="Save">{@render icon('save', 16)}</button>
						<i class="sep"></i>
						<button class="tool" aria-label="Image">{@render icon('image', 16)}</button>
						<button class="tool" aria-label="Transfer in">{@render icon('tri', 16)}</button>
						<button class="tool" aria-label="Transfer out">{@render icon('triRed', 16)}</button>
						<i class="sep"></i>
						<button class="tool" aria-label="Layers">{@render icon('layers', 16)}</button>
						<i class="sep"></i>
						<button class="tool" aria-label="Network">{@render icon('net', 16)}</button>
						<i class="sep"></i>
						<button class="tool text-tool">{@render icon('calendar', 16)}Top Event</button>
						<button class="tool text-tool">{@render icon('calendar', 16)}Node</button>
						<i class="sep"></i>
						<label for="order">Order</label>
						<span class="select">
							<select id="order" bind:value={order}>
								{#each ['1', '2', '3', '4', '5'] as n}<option>{n}</option>{/each}
							</select>
							<i class="tri down dark"></i>
						</span>
						<i class="sep"></i>
						<button class="tool text-tool">{@render icon('search', 16)}Result</button>
						<span class="grow"></span>
						<button class="tool layout-tool">{@render icon('loose', 16)}Loose Layout</button>
						<i class="sep"></i>
						<button class="tool layout-tool">{@render icon('full', 16)}FullSize Layout</button>
						<button class="overflow" aria-label="More"><i class="tri down"></i></button>
					</div>
					<div class="canvas">
						<svg class="diagram" width="1358" height="793" viewBox="0 0 1358 793">
							<path class="page-edge" d="M0 598.500h877.500V0" />
							<rect class="picked" x="353.500" y="499.500" width="91" height="91" />
							{#each shapes as s}
								{#if s.kind === 'box'}
									<rect class="shape" x={s.x - 45.5} y={s.y - 20.5} width="91" height="42" />
								{:else}
									<circle class="shape" cx={s.x + 0.5} cy={s.y + 0.5} r="45.500" />
								{/if}
								{#each s.lines as line, i}
									<text x={s.x} y={s.y + 4 + i * 13 - (s.lines.length - 1) * 6.5} text-anchor="middle">{line}</text>
								{/each}
							{/each}
							<text x="11" y="301" text-anchor="end">o a</text>
							<text x="8" y="314" text-anchor="end">ld</text>
							<text x="3" y="542" text-anchor="end">g</text>
							{#each links as d}
								<path class="link" {d} />
							{/each}
							{#each arrows as [x, y]}
								<path class="arrow" d="M{x - 3} {y - 6}h7l-3.500 7z" />
							{/each}
							{#each gates as [x, y]}
								<path class="gate-shape" d="M{x + 0.5} {y}q16 7 16.500 24v16q-16-6-33 0v-16q0-17 16.500-24z" />
							{/each}
						</svg>
						{@render vscroll('none')}
					</div>
					{@render hscroll('none')}
				</section>

				<aside class="model">
					<div class="caption">Model</div>
					<div class="palette">
						{#each palette as item}
							<button aria-label={item.name}><svg width="48" height="48" viewBox="0 0 48 48">{@html item.svg}</svg></button>
						{/each}
					</div>
					<button class="dock-button">{@render icon('model', 16)}Model</button>
				</aside>
			</div>
		</div>

		<section class="results">
			<div class="results-title">
				Fault Tree Results
				<span class="grow"></span>
				<button aria-label="Maximize"><svg width="10" height="8"><rect x="1" y="1" width="8" height="5" fill="none" stroke="#6b6e7c" stroke-width="2" /></svg></button>
				<button aria-label="Close results"><svg width="10" height="8"><path d="M1 0l8 8M9 0L1 8" stroke="#6b6e7c" stroke-width="2" /></svg></button>
			</div>
			<div class="export-row"><button class="tool">{@render icon('export', 16)}Export</button></div>
			<dl class="facts">
				<div><dt>Fault Tree Name:</dt><dd>Solar Array Subsystem FTA</dd></div>
				<div><dt>Calculating Node:</dt><dd>Failure of SADA</dd></div>
				<div><dt>Occurrence Probability:</dt><dd>1</dd></div>
			</dl>
			<div class="results-body">
				<div class="side-tabs">
					<button class="active">{@render icon('cutset', 16)}Minimal CutSet</button>
					<button>{@render icon('eventList', 16)}Event List</button>
					<button>{@render icon('importance', 16)}Event Importance</button>
				</div>
				<div class="results-content">
					<div class="cutsets">
						<div class="cutset-grid">
							<table>
								<thead>
									<tr><th></th><th>Num...</th><th></th></tr>
								</thead>
								<tbody>
									{#each cutSets as name, i}
										<tr class:alt={i % 2 === 1} class:current={i === 0}>
											<td class="gutter">{#if i === 0}<i class="tri right dark"></i>{/if}</td>
											<td class="num">1</td>
											<td class="text">{name}</td>
										</tr>
									{/each}
								</tbody>
							</table>
							{@render vscroll('tall')}
						</div>
						{@render hscroll('small')}
					</div>
					<div class="splitter plain"></div>
					<div class="charts">
						<figure class="chart">
							<svg viewBox="0 0 553 310">
								<text class="chart-title" x="275" y="28" text-anchor="middle">Quantity Statistics of All CutSet Order</text>
								<rect class="plot" x="29.500" y="47.500" width="416" height="234" />
								{#each majorTicks as t}
									<path class="gridline" d="M30 {axisY - barHeight(t) + 0.5}h415" />
									<path class="axis" d="M24 {axisY - barHeight(t) + 0.5}h6" />
									<text x="18" y={axisY - barHeight(t) + 4} text-anchor="end">{t}</text>
								{/each}
								{#each minorTicks as t}
									<path class="axis" d="M27 {axisY - t + 0.5}h3" />
								{/each}
								{#each minorX as x}
									<path class="axis" d="M{x - 0.5} 282v3" />
								{/each}
								{#each bars as b}
									<path class="axis" d="M{b.x + 62.5} 282v6" />
									<rect x={b.x + 0.5} y={axisY - barHeight(b.value) + 0.5} width="125" height={barHeight(b.value)} fill={b.fill} stroke={b.edge} />
									<rect x={b.x + 33.5} y={axisY - Math.round(barHeight(b.value) / 2) - 8.5} width="59" height="15" fill="#fff" stroke={b.edge} />
									<text x={b.x + 63} y={axisY - Math.round(barHeight(b.value) / 2) + 3} text-anchor="middle" fill={b.edge}>{b.name}:{b.value}</text>
									<text x={b.x + 63} y="301" text-anchor="middle">{b.name}</text>
								{/each}
								<path class="axis" d="M30 281.500h415" />
								<rect class="legend" x="455.500" y="47.500" width="87" height="39" />
								{#each bars as b, i}
									<rect x="460.500" y={51.5 + i * 18} width="17" height="13" fill={b.fill} stroke={b.edge} />
									<text x="483" y={62 + i * 18}>{b.name}:{b.value}</text>
								{/each}
							</svg>
						</figure>
						<figure class="chart">
							<svg viewBox="0 0 553 308">
								<text class="chart-title" x="275" y="28" text-anchor="middle">Probability Statistics of All CutSet Order</text>
								<circle cx="211" cy="174" r="101" fill="#c0504d" />
								<path d="M211 174h101a101 101 0 0 0-2-22z" fill="#4f81bd" stroke="#b9a3b4" />
								<path d="M101 186l10-1" stroke="#a33f3c" />
								<path d="M311 162l9-1" stroke="#3f6ca3" />
								<rect x="14.500" y="177.500" width="86" height="15" fill="#fff" stroke="#a33f3c" />
								<text x="57" y="189" text-anchor="middle" fill="#a33f3c">1orders:3.12508</text>
								<rect x="320.500" y="153.500" width="91" height="15" fill="#fff" stroke="#3f6ca3" />
								<text x="366" y="165" text-anchor="middle" fill="#3f6ca3">2orders:0.112416</text>
								<rect class="legend" x="422.500" y="47.500" width="120" height="39" />
								<path d="M427 65V52q15 1 18 13z" fill="#4f81bd" />
								<path d="M427 83V70q15 1 18 13z" fill="#c0504d" />
								<text x="450" y="62">2orders:0.112416</text>
								<text x="450" y="80">1orders:3.12508</text>
							</svg>
						</figure>
					</div>
				</div>
			</div>
		</section>
	</main>
</div>

<style>
	:global(body) {
		margin: 0;
	}

	.app {
		--line: #9c9fac;
		--soft: #cfd1d9;
		--face: #ebecf0;
		--ink: #1e1e2d;
		height: 100vh;
		display: flex;
		flex-direction: column;
		overflow: hidden;
		background: #e9ebef;
		color: var(--ink);
		font: 12px/14px 'DejaVu Sans Condensed', 'DejaVu Sans', sans-serif;
	}

	.app * {
		box-sizing: border-box;
	}

	button,
	input,
	select {
		margin: 0;
		padding: 0;
		border: 0;
		background: none;
		color: inherit;
		font: inherit;
		outline: 0;
	}

	.icon {
		flex: none;
		display: block;
	}

	.grow {
		flex: 1;
	}

	/* small triangles */
	.tri {
		display: block;
		flex: none;
		width: 0;
		height: 0;
		border: 4px solid transparent;
	}
	.tri.down { border-top-color: #7e818e; border-bottom-width: 0; }
	.tri.up { border-bottom-color: #7e818e; border-top-width: 0; }
	.tri.left { border-right-color: #7e818e; border-left-width: 0; }
	.tri.right { border-left-color: #7e818e; border-right-width: 0; }
	.tri.down.dark { border-top-color: var(--ink); }
	.tri.right.dark { border-left-color: var(--ink); }

	/* scrollbars */
	.vscroll {
		width: 17px;
		flex: none;
		display: flex;
		flex-direction: column;
		align-items: center;
		padding: 6px 0;
		background: #f4f4f6;
	}
	.hscroll {
		height: 17px;
		flex: none;
		display: flex;
		align-items: center;
		padding: 0 24px 0 6px;
		background: #f4f4f6;
	}
	.vscroll .tri.down {
		margin-top: auto;
	}
	.hscroll .tri.right {
		margin-left: auto;
	}
	.thumb {
		border: 1px solid #a9abb6;
		border-radius: 4px;
		background: #dedfe4;
	}
	.thumb.none { display: none; }
	.vscroll .thumb { width: 7px; margin-top: 5px; }
	.hscroll .thumb { height: 7px; margin-left: 7px; }
	.thumb.short { height: 81px; }
	.thumb.tall { height: 183px; }
	.thumb.long { width: 130px; }
	.thumb.small { width: 54px; }

	/* title and menu */
	.titlebar {
		height: 27px;
		flex: none;
		display: grid;
		grid-template-columns: 120px 1fr 120px;
		align-items: center;
		background: linear-gradient(#e1e2e7, #dadbe0);
	}
	.logo {
		margin-left: 2px;
	}
	h1 {
		margin: 0;
		text-align: center;
		font-size: 12px;
		color: #a9acb8;
	}
	.window-buttons {
		display: flex;
		justify-content: flex-end;
		gap: 3px;
		padding-right: 1px;
	}
	.window-buttons button {
		width: 28px;
		height: 15px;
		display: grid;
		place-items: center;
		border: 1px solid #a3a6b2;
		border-radius: 2px;
		background: linear-gradient(#e9eaee, #d3d4da);
	}

	.menu {
		height: 23px;
		flex: none;
		display: flex;
		gap: 1px;
		padding-left: 2px;
		background: #d8d9de;
		border-bottom: 1px solid var(--line);
	}
	.app-button {
		width: 56px;
		height: 21px;
		display: grid;
		place-items: center;
		border: 1px solid #a99fb8;
		background: linear-gradient(100deg, #eadff2, #c9b4e2 50%, #efe4f8);
	}
	.menu-tab {
		height: 22px;
		padding: 0 11px;
		color: #4a4c5c;
		border: 1px solid transparent;
		border-bottom: 0;
	}
	.menu-tab.active {
		height: 23px;
		color: var(--ink);
		background: #fff;
		border-color: var(--line);
	}
	.skin {
		margin-left: auto;
		padding-right: 5px;
	}

	/* ribbon */
	.ribbon {
		height: 94px;
		flex: none;
		display: flex;
		background: linear-gradient(#fff, #f7f8fa 60%, #eeeff3);
		border-bottom: 1px solid var(--line);
	}
	.group {
		display: flex;
		flex-direction: column;
		border-right: 1px solid #b3b5bf;
	}
	.group-items {
		flex: 1;
		display: flex;
		padding: 5px 3px 0;
	}
	.big {
		display: flex;
		flex-direction: column;
		align-items: center;
		gap: 5px;
		padding: 0 6px;
	}
	.big span {
		white-space: pre;
		text-align: center;
	}
	.group-label {
		height: 18px;
		padding-top: 2px;
		text-align: center;
		color: #8a8c98;
		border-top: 1px solid #dcdde3;
	}
	.collapse {
		margin: auto 8px 3px auto;
	}

	.workspace {
		flex: 1;
		min-height: 0;
		display: flex;
		gap: 5px;
		padding: 5px 2px 2px;
		position: relative;
	}

	/* product tree */
	.product {
		width: 196px;
		flex: none;
		display: flex;
		flex-direction: column;
		border: 1px solid var(--line);
		background: #f2f3f6;
		padding: 0 1px;
	}
	.panel-title {
		height: 19px;
		display: flex;
		align-items: center;
		justify-content: space-between;
		padding: 0 7px 0 4px;
		color: #9b9eab;
		background: #dddee3;
	}
	.bar {
		height: 34px;
		display: flex;
		align-items: center;
		gap: 10px;
		padding-left: 8px;
		background: var(--face);
	}
	.bar .sep {
		margin: 0 -2px;
	}
	.sep {
		width: 1px;
		height: 16px;
		background: #c3c5ce;
	}
	.overflow {
		width: 16px;
		height: 28px;
		margin-left: auto;
		display: grid;
		place-items: center;
		border: 1px solid #b9bbc5;
		border-width: 0 1px 1px 0;
		background: linear-gradient(90deg, #fff, #e3e4e9);
	}
	.product-body {
		flex: 1;
		min-height: 0;
		border: 1px solid var(--line);
		background: #fff;
	}
	.search {
		height: 50px;
		display: flex;
		align-items: center;
		justify-content: center;
		gap: 5px;
		padding: 0 13px;
		background: #dfe0e5;
		border-bottom: 1px solid var(--soft);
	}
	.combo {
		height: 20px;
		flex: 1;
		min-width: 0;
		display: flex;
		align-items: center;
		background: #fff;
		border: 1px solid #b9bbc5;
	}
	.combo input {
		flex: 1;
		min-width: 0;
		padding-left: 3px;
	}
	.combo input::placeholder {
		color: #9fa1ab;
		opacity: 1;
	}
	.combo button {
		padding: 0 4px;
	}
	.clear {
		width: 70px;
		height: 22px;
		border: 1px solid #a6a8b3;
		border-radius: 2px;
		background: linear-gradient(#f4f4f7, #dcdde2);
	}
	.tree {
		margin: 0;
		padding: 0;
		list-style: none;
	}
	.tree li {
		height: 25px;
		display: flex;
		align-items: center;
	}
	.twist {
		width: 16px;
		flex: none;
		display: flex;
		padding-left: 1px;
	}
	.tree .name {
		flex: 1;
		padding-left: 5px;
		line-height: 25px;
		white-space: nowrap;
	}
	.tree .name.selected {
		background: #efeff0;
	}
	.dock-button {
		height: 27px;
		flex: none;
		display: flex;
		align-items: center;
		gap: 6px;
		margin: 2px 1px 1px;
		padding-left: 8px;
		border: 1px solid #a6a8b3;
		background: #d5d6dc;
		box-shadow: inset 1px 1px 1px #bfc0c9;
		white-space: nowrap;
	}
	.dock-button.tall {
		height: 44px;
		padding-left: 10px;
	}

	/* documents */
	.documents {
		flex: 1;
		min-width: 0;
		display: flex;
		flex-direction: column;
	}
	.doc-tabs {
		height: 24px;
		flex: none;
		display: flex;
		align-items: flex-end;
		padding-left: 2px;
		margin-bottom: -1px;
		position: relative;
	}
	.doc-tab {
		height: 22px;
		padding: 0 25px 0 9px;
		color: #5f616e;
		background: linear-gradient(90deg, #dcdde2, #e8e9ed);
		border: 1px solid var(--line);
		margin-right: -1px;
	}
	.doc-tab.active {
		height: 24px;
		display: flex;
		align-items: center;
		gap: 16px;
		padding: 0 6px 0 10px;
		color: #82848f;
		background: var(--face);
		border-bottom-color: var(--face);
	}
	.doc-tabs .end {
		margin: 0 14px 12px auto;
	}
	.doc {
		flex: 1;
		min-height: 0;
		display: flex;
		border: 1px solid var(--line);
		background: var(--face);
	}

	.fault {
		width: 252px;
		flex: none;
		display: flex;
		flex-direction: column;
	}
	.caption {
		height: 31px;
		flex: none;
		display: flex;
		align-items: center;
		justify-content: space-between;
		padding: 0 12px 0 9px;
		background: linear-gradient(90deg, #e4e5ea, #f3f4f6 80%, #ebecf0);
		border-bottom: 1px solid #d5d6dc;
	}
	.export-row {
		height: 32px;
		flex: none;
		display: flex;
		align-items: center;
		padding-left: 4px;
	}
	.tool {
		display: flex;
		align-items: center;
		gap: 4px;
		padding: 0 3px;
		white-space: nowrap;
	}
	.fault-body {
		flex: 1;
		min-height: 0;
		display: flex;
		flex-direction: column;
		border: 1px solid var(--line);
		border-left: 0;
	}
	.search.wide {
		flex: none;
		height: 49px;
	}

	table {
		border-collapse: collapse;
		flex: 1;
		min-width: 0;
		display: block;
	}
	thead,
	tbody {
		display: block;
	}
	tr {
		display: grid;
	}
	th {
		padding: 0;
		font-weight: normal;
		display: flex;
		align-items: center;
		justify-content: center;
		background: linear-gradient(#f8f8fa, #edeef1);
		border-right: 1px solid var(--soft);
		border-bottom: 1px solid var(--soft);
	}
	td {
		padding: 0;
	}
	.gutter {
		display: flex;
		align-items: center;
		justify-content: center;
		background: #f4f4f7;
		border-right: 1px solid #c5c7d0;
		border-bottom: 1px solid #c5c7d0;
	}

	.fault-grid,
	.cutset-grid {
		flex: 1;
		min-height: 0;
		display: flex;
		overflow: hidden;
		background: #fff;
	}
	.fault-grid tr {
		grid-template-columns: 16px 1fr 77px;
	}
	.fault-grid thead tr {
		height: 22px;
		grid-template-columns: 16px 1fr 94px;
		margin-right: -17px;
	}
	.fault-grid thead {
		position: relative;
	}
	.fault-grid .vscroll {
		margin-top: 22px;
	}
	.node {
		display: flex;
		align-items: center;
		overflow: hidden;
	}
	.cell {
		flex: 1;
		align-self: stretch;
		padding: 1px 0 3px 5px;
		white-space: pre;
		border-left: 1px solid var(--soft);
		border-bottom: 1px solid var(--soft);
	}
	.gate {
		display: flex;
		align-items: center;
		padding-left: 4px;
		border-left: 1px solid var(--soft);
		border-bottom: 1px solid var(--soft);
	}
	.alt .cell,
	.alt .gate,
	.alt .num,
	.alt .text {
		background: #f1f4fa;
	}
	.current .cell,
	.current .gate {
		background: #f0f0f1;
	}

	.splitter {
		width: 4px;
		flex: none;
		display: grid;
		place-items: center;
		background: #f2f3f6;
	}
	.splitter::before {
		content: '';
		width: 3px;
		height: 14px;
		background: repeating-linear-gradient(#8f929e 0 1px, transparent 1px 2px);
	}
	.splitter.plain {
		background: none;
	}

	/* design surface */
	.design {
		flex: 1;
		min-width: 0;
		display: flex;
		flex-direction: column;
		border-left: 1px solid #c5c7d0;
		border-right: 1px solid var(--line);
	}
	.toolbar {
		height: 30px;
		flex: none;
		display: flex;
		align-items: center;
		gap: 5px;
		padding-left: 7px;
		border-bottom: 1px solid var(--line);
	}
	.text-tool {
		gap: 5px;
		padding: 0 4px;
	}
	.layout-tool {
		gap: 6px;
		padding: 0 7px 0 3px;
	}
	.layout-tool + .overflow {
		margin-left: 14px;
	}
	.select {
		width: 50px;
		height: 20px;
		display: flex;
		align-items: center;
		padding-right: 4px;
		background: #fff;
		border: 1px solid #b9bbc5;
	}
	.select select {
		flex: 1;
		appearance: none;
		padding-left: 3px;
	}
	.canvas {
		flex: 1;
		min-height: 0;
		display: flex;
		justify-content: space-between;
		overflow: hidden;
		background: #fff;
	}
	.diagram {
		flex: none;
		margin-right: -17px;
		font: 11px Lato, sans-serif;
	}
	.canvas .vscroll {
		position: relative;
	}
	.shape {
		fill: none;
		stroke: #1c1c1c;
	}
	.picked {
		fill: none;
		stroke: #8c8c8c;
	}
	.page-edge {
		fill: none;
		stroke: #a6a6a6;
		stroke-dasharray: 3 2;
	}
	.link {
		fill: none;
		stroke: #5b9bd5;
	}
	.arrow {
		fill: #5b9bd5;
	}
	.gate-shape {
		fill: #0095dc;
	}

	.model {
		width: 80px;
		flex: none;
		display: flex;
		flex-direction: column;
	}
	.model .caption {
		height: 34px;
	}
	.palette {
		flex: 1;
		min-height: 0;
		overflow: hidden;
		display: flex;
		flex-direction: column;
		align-items: center;
	}
	.palette button {
		height: 52px;
		flex: none;
		padding: 2px 4px 2px 0;
	}
	.palette svg {
		display: block;
	}

	/* floating results window */
	.results {
		position: absolute;
		left: 874px;
		right: 78px;
		top: 153px;
		bottom: 0;
		display: flex;
		flex-direction: column;
		background: var(--face);
		border: 1px solid var(--line);
		padding: 1px 4px 5px 1px;
		box-shadow: 0 0 2px #8d909c;
	}
	.results-title {
		height: 18px;
		flex: none;
		display: flex;
		align-items: center;
		gap: 14px;
		padding: 0 5px 0 4px;
		color: #5d606c;
		background: #dcdde1;
	}
	.results .export-row {
		height: 33px;
		padding-left: 5px;
	}
	.facts {
		height: 29px;
		flex: none;
		margin: 0;
		display: flex;
		align-items: center;
		padding-left: 12px;
		background: #fff;
	}
	.facts div {
		display: flex;
		gap: 11px;
		margin-right: 37px;
	}
	.facts div:nth-child(2) {
		margin-right: 90px;
	}
	.facts dd {
		margin: 0;
		color: #0000e8;
	}
	.results-body {
		flex: 1;
		min-height: 0;
		display: flex;
	}
	.side-tabs {
		width: 132px;
		flex: none;
		padding-top: 3px;
		display: flex;
		flex-direction: column;
		align-items: stretch;
	}
	.side-tabs button {
		height: 34px;
		display: flex;
		align-items: center;
		gap: 3px;
		margin-left: 2px;
		padding-left: 7px;
		color: #4f515f;
		background: linear-gradient(90deg, #dadbe0, #e8e9ed);
		border: 1px solid var(--line);
		border-right: 0;
		white-space: nowrap;
	}
	.side-tabs .active {
		height: 36px;
		margin: 0 -1px 0 0;
		color: var(--ink);
		background: #fff;
		position: relative;
	}
	.results-content {
		flex: 1;
		min-width: 0;
		display: flex;
		gap: 1px;
		padding: 3px 3px 3px 3px;
		background: #fff;
		border: 1px solid var(--line);
	}
	.cutsets {
		width: 261px;
		flex: none;
		display: flex;
		flex-direction: column;
		border: 1px solid var(--line);
	}
	.cutset-grid tr {
		height: 21px;
		grid-template-columns: 16px 47px 1fr;
	}
	.cutset-grid thead tr {
		margin-right: -17px;
	}
	.cutset-grid thead {
		position: relative;
	}
	.cutset-grid .vscroll {
		margin-top: 21px;
	}
	.num {
		padding: 3px 4px 0 0;
		text-align: right;
		border-right: 1px solid var(--soft);
		border-bottom: 1px solid var(--soft);
	}
	.text {
		padding: 2px 0 0 5px;
		overflow: hidden;
		white-space: nowrap;
		border-bottom: 1px solid var(--soft);
	}
	.current .num {
		border: 1px dotted #333;
	}
	.current .text {
		background: #e0e9fb;
	}

	.charts {
		flex: 1;
		min-width: 0;
		display: grid;
		grid-template-rows: 312px 1fr;
		gap: 4px;
	}
	.chart {
		margin: 0;
		min-height: 0;
		border: 1px solid var(--line);
	}
	.chart svg {
		display: block;
		width: 100%;
		height: 100%;
		font-size: 11px;
	}
	.chart text {
		fill: var(--ink);
	}
	.chart text[fill='#3f6ca3'] {
		fill: #3f6ca3;
	}
	.chart text[fill='#a33f3c'] {
		fill: #a33f3c;
	}
	.chart .chart-title {
		font-size: 24px;
	}
	.plot,
	.legend {
		fill: #fff;
		stroke: #a9a9a9;
	}
	.gridline {
		stroke: #dedede;
	}
	.axis {
		stroke: #a9a9a9;
	}
</style>
